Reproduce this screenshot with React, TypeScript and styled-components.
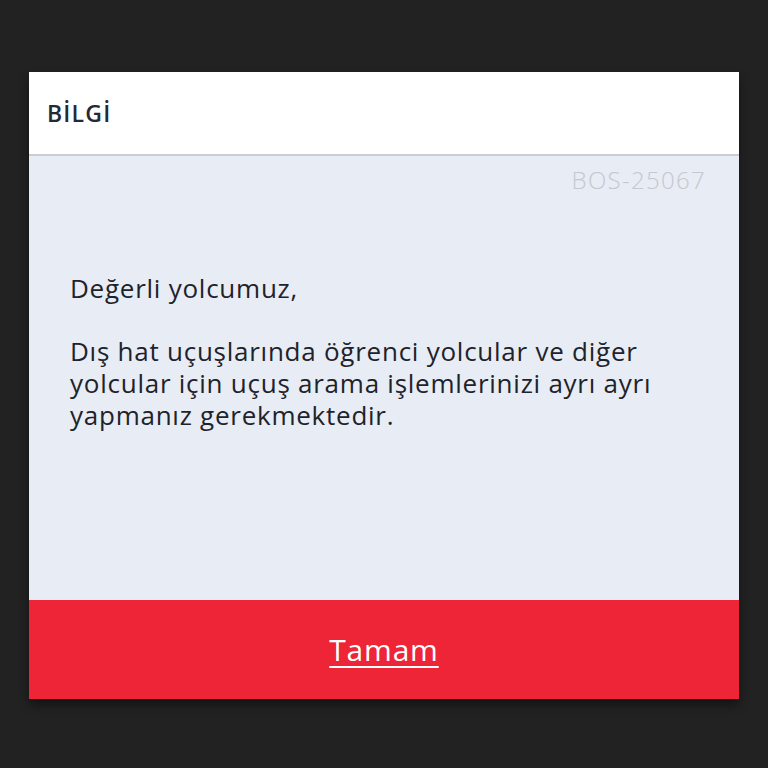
import styled, { createGlobalStyle } from "styled-components";

const GlobalStyle = createGlobalStyle`
  html, body {
    margin: 0;
    padding: 0;
    background: #222222;
    font-family: "Open Sans", Lato, sans-serif;
  }
`

const Screen = styled.div`
  width: 768px;
  height: 768px;
  background: #222222;
  padding: 72px 29px 0;
  box-sizing: border-box;
`
const Dialog = styled.div`
  width: 710px;
  display: flex;
  flex-direction: column;
  box-shadow: 0 6px 10px rgba(0, 0, 0, 0.45);
`
const Header = styled.div`
  height: 84px;
  background: #ffffff;
  display: flex;
  align-items: center;
  padding-left: 18px;
  border-bottom: 2px solid #c9ccd1;
  box-sizing: border-box;
`
const Title = styled.div`
  font-size: 23px;
  font-weight: 600;
  color: #232a35;
  letter-spacing: 1.2px;
`
const Body = styled.div`
  height: 444px;
  background: #e8ecf4;
  padding: 9px 33px 0 41px;
  box-sizing: border-box;
  display: flex;
  flex-direction: column;
`
const Code = styled.div`
  align-self: flex-end;
  font-size: 24px;
  font-weight: 300;
  color: #c4c8cf;
  line-height: 30px;
  letter-spacing: 1.3px;
`
const Message = styled.div`
  margin-top: 77px;
  max-width: 600px;
  font-size: 26px;
  line-height: 32px;
  letter-spacing: 0.75px;
  color: #1e232b;
`
const Paragraph = styled.p`
  margin: 0 0 31px;
`
const Button = styled.div`
  height: 99px;
  background: #ee2536;
  display: flex;
  align-items: center;
  justify-content: center;
`
const ButtonLabel = styled.span`
  color: #ffffff;
  font-size: 30px;
  letter-spacing: 0.8px;
  text-decoration: underline;
  text-underline-offset: 5px;
  text-decoration-thickness: 2px;
`

const App = () => {
    return (
        <Screen>
            <GlobalStyle/>
            <Dialog>
                <Header>
                    <Title>BİLGİ</Title>
                </Header>
                <Body>
                    <Code>BOS-25067</Code>
                    <Message>
                        <Paragraph>Değerli yolcumuz,</Paragraph>
                        <Paragraph>
                            Dış hat uçuşlarında öğrenci yolcular ve diğer yolcular için uçuş arama
                            işlemlerinizi ayrı ayrı yapmanız gerekmektedir.
                        </Paragraph>
                    </Message>
                </Body>
                <Button>
                    <ButtonLabel>Tamam</ButtonLabel>
                </Button>
            </Dialog>
        </Screen>
    );
};
export default App;
